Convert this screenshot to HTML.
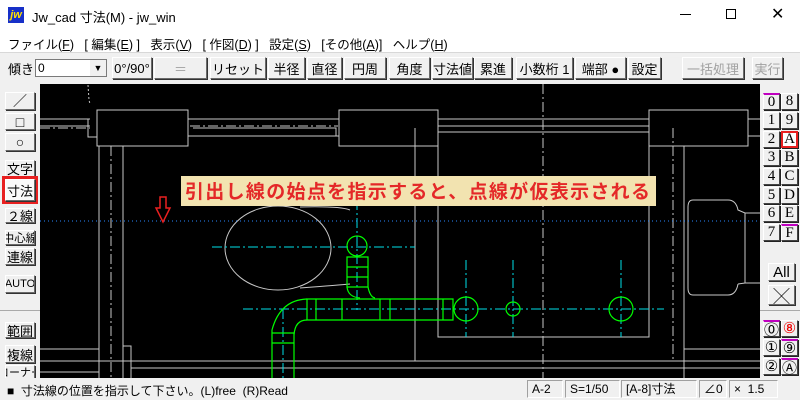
<!DOCTYPE html>
<html><head><meta charset="utf-8"><style>
*{margin:0;padding:0;box-sizing:border-box}
body{width:800px;height:400px;overflow:hidden;background:#f0f0f0;font-family:"Liberation Sans","Noto Sans CJK JP",sans-serif;font-size:12px;color:#000;position:relative}
.a{position:absolute;white-space:nowrap}
.b{position:absolute;background:#f0f0f0;border:1px solid;border-color:#fff #6a6a6a #6a6a6a #fff;box-shadow:1px 1px 0 #333;display:flex;align-items:center;justify-content:center;font-size:13px;white-space:nowrap;overflow:hidden}
.g{color:#a0a0a0}
.rb{position:absolute;width:17px;height:17px;border:1px solid;border-color:#fff #444 #444 #fff;box-shadow:1px 1px 0 #222;background:#f0f0f0;font-family:"Liberation Serif",serif;font-size:15px;display:flex;align-items:center;justify-content:center}
.sb{position:absolute;top:380px;height:18px;border:1px solid;border-color:#a0a0a0 #fff #fff #a0a0a0;font-size:12px;line-height:16px;padding-left:4px}
</style></head><body>
<div class="a" style="left:0;top:0;width:800px;height:30px;background:#fff"></div>
<div class="a" style="left:8px;top:7px;width:16px;height:16px;background:#1730c8;color:#ffe000;font:bold italic 11px 'Liberation Sans';line-height:16px;text-align:center">jw</div>
<div class="a" style="left:32px;top:7px;font-size:13px">Jw_cad 寸法(M) - jw_win</div>
<div class="a" style="left:680px;top:14px;width:11px;height:1px;background:#000"></div>
<div class="a" style="left:726px;top:9px;width:10px;height:10px;border:1px solid #000"></div>
<div class="a" style="left:771px;top:4px;font-size:16px">✕</div>
<div class="a" style="left:0;top:30px;width:800px;height:22px;background:#fff"></div>
<div class="a" style="left:8px;top:34px;font-size:12.5px">ファイル(<u>F</u>)&nbsp;&nbsp;&nbsp;[ 編集(<u>E</u>) ]&nbsp;&nbsp;&nbsp;表示(<u>V</u>)&nbsp;&nbsp;&nbsp;[ 作図(<u>D</u>) ]&nbsp;&nbsp;&nbsp;設定(<u>S</u>)&nbsp;&nbsp;&nbsp;[その他(<u>A</u>)]&nbsp;&nbsp;&nbsp;ヘルプ(<u>H</u>)</div>
<div class="a" style="left:0;top:52px;width:800px;height:1px;background:#d8d8d8"></div>
<div class="a" style="left:8px;top:59px;font-size:13px">傾き</div>
<div class="a" style="left:35px;top:59px;width:72px;height:18px;background:#fff;border:1px solid #7a7a7a;font-size:12px;padding-left:2px;line-height:16px">0</div>
<div class="a" style="left:90px;top:60px;width:16px;height:16px;background:#f0f0f0;font-size:9px;text-align:center;line-height:16px">▼</div>
<div class="b" style="left:112px;top:57px;width:40px;height:22px">0°/90°</div>
<div class="b g" style="left:154px;top:57px;width:53px;height:22px">＝</div>
<div class="b" style="left:210px;top:57px;width:56px;height:22px">リセット</div>
<div class="b" style="left:268px;top:57px;width:37px;height:22px">半径</div>
<div class="b" style="left:307px;top:57px;width:35px;height:22px">直径</div>
<div class="b" style="left:344px;top:57px;width:42px;height:22px">円周</div>
<div class="b" style="left:389px;top:57px;width:41px;height:22px">角度</div>
<div class="b" style="left:432px;top:57px;width:41px;height:22px">寸法値</div>
<div class="b" style="left:474px;top:57px;width:38px;height:22px">累進</div>
<div class="b" style="left:516px;top:57px;width:57px;height:22px">小数桁 1</div>
<div class="b" style="left:575px;top:57px;width:51px;height:22px">端部 ●</div>
<div class="b" style="left:628px;top:57px;width:33px;height:22px">設定</div>
<div class="b g" style="left:682px;top:57px;width:62px;height:22px">一括処理</div>
<div class="b g" style="left:752px;top:57px;width:31px;height:22px">実行</div>
<svg class="a" style="left:40px;top:84px" width="720" height="294" viewBox="40 84 720 294">
<rect x="40" y="84" width="720" height="294" fill="#000"/>
<g fill="none" stroke="#c8c8c8" stroke-width="1">
<path d="M88 85 L89 100 L90 104" stroke-dasharray="2 2"/>
<path d="M40 119H90M40 126H90M88 119V137H97M97 110H188V146H97Z"/>
<path d="M188 119H339M188 136H339M193 128H336V136"/>
<path d="M339 110H438V146H339Z"/>
<path d="M99 146V378M123 146V378M123 346H131V378M131 368H760"/>
<path d="M40 349H99M40 372H99"/>
<path d="M438 132H649V337H438Z"/>
<path d="M438 119H649M438 126H649"/>
<path d="M649 110H748V146H649Z"/>
<path d="M684 146V378M684 349H760M748 119H760M748 136H760"/>
<path d="M415 128V361M44 361H760"/>
<path d="M693 200H728Q736 200 738 210L745 213H760M738 284Q736 295 728 295H693Q688 295 688 288V207Q688 200 693 200M738 284L745 283H760M745 213V283"/>
<ellipse cx="278" cy="248" rx="53" ry="42"/>
<path d="M300 207Q340 206 350 210M300 288Q340 285 350 284"/>
</g>
<g fill="none" stroke="#c8c8c8" stroke-dasharray="10 3 2 3">
<path d="M111 146V378M543 84V378M673 128V361M40 128H90M40 361H760M190 126H338"/>
</g>
<g fill="none" stroke="#00e0e8" stroke-dasharray="10 3 2 3">
<path d="M212 247H415M357 200V310M243 309H664M466 260V337M513 260V337M621 260V337M283 309V378"/>
</g>
<g fill="none" stroke="#00ff00" stroke-width="1.2">
<circle cx="357" cy="246" r="10"/>
<path d="M347 257H368V287H347ZM347 267H368M347 277H368"/>
<path d="M347 287Q348 297 360 298M368 287Q370 297 375 298"/>
<path d="M307 299H453V320H307ZM316 299V320M342 299V320M380 299V320M390 299V320M443 299V320"/>
<path d="M307 299Q280 300 272 330V378M307 320Q295 320 294 335V378M272 333H294V343H272Z"/>
<circle cx="466" cy="309" r="12"/><circle cx="513" cy="309" r="7"/><circle cx="621" cy="309" r="12"/>
</g>
<line x1="40" y1="221" x2="760" y2="221" stroke="#2a88ff" stroke-dasharray="1 3"/>
<path d="M160 197H166V208H170L163 222L156 208H160Z" fill="none" stroke="#e82020" stroke-width="1.5"/>
<rect x="181" y="176" width="475" height="30" fill="#f2e3b0"/>
<text x="185" y="198" fill="#e42828" font-family="Liberation Sans,Noto Sans CJK JP,sans-serif" font-weight="bold" font-size="19" textLength="465">引出し線の始点を指示すると、点線が仮表示される</text>
</svg>
<div class="b" style="left:5px;top:92px;width:30px;height:18px;font-size:14px">／</div>
<div class="b" style="left:5px;top:113px;width:30px;height:17px;font-size:14px">□</div>
<div class="b" style="left:5px;top:133px;width:30px;height:18px;font-size:14px">○</div>
<div class="b" style="left:5px;top:160px;width:30px;height:17px">文字</div>
<div class="a" style="left:2px;top:176px;width:36px;height:28px;border:3px solid #e82020"></div>
<div class="b" style="left:5px;top:179px;width:30px;height:22px;background:#fafafa">寸法</div>
<div class="b" style="left:5px;top:208px;width:30px;height:15px">２線</div>
<div class="b" style="left:5px;top:230px;width:30px;height:15px;font-size:11.5px">中心線</div>
<div class="b" style="left:5px;top:248px;width:30px;height:17px">連線</div>
<div class="b" style="left:5px;top:275px;width:30px;height:18px;font-size:11px">AUTO</div>
<div class="a" style="left:0;top:310px;width:40px;height:1px;background:#aaa"></div>
<div class="b" style="left:5px;top:322px;width:30px;height:16px">範囲</div>
<div class="b" style="left:5px;top:345px;width:30px;height:18px">複線</div>
<div class="b" style="left:5px;top:365px;width:30px;height:14px;font-size:11px">コーナー</div>
<div class="rb" style="left:763px;top:93px;border-top:2px solid #c000c0">0</div><div class="rb" style="left:781px;top:93px">8</div>
<div class="rb" style="left:763px;top:112px">1</div><div class="rb" style="left:781px;top:112px">9</div>
<div class="rb" style="left:763px;top:131px">2</div><div class="rb" style="left:781px;top:131px;border:2px solid #e82020;background:#fff">A</div>
<div class="rb" style="left:763px;top:149px">3</div><div class="rb" style="left:781px;top:149px">B</div>
<div class="rb" style="left:763px;top:168px">4</div><div class="rb" style="left:781px;top:168px">C</div>
<div class="rb" style="left:763px;top:187px">5</div><div class="rb" style="left:781px;top:187px">D</div>
<div class="rb" style="left:763px;top:205px">6</div><div class="rb" style="left:781px;top:205px">E</div>
<div class="rb" style="left:763px;top:224px">7</div><div class="rb" style="left:781px;top:224px;border-top:2px solid #c000c0">F</div>
<div class="b" style="left:768px;top:263px;width:27px;height:18px;font-size:15px">All</div>
<div class="b" style="left:768px;top:285px;width:27px;height:20px;font-size:16px">╳</div>
<div class="a" style="left:760px;top:310px;width:40px;height:1px;background:#aaa"></div>
<div class="rb" style="left:763px;top:320px;border-top:2px solid #c000c0">⓪</div><div class="rb" style="left:781px;top:320px;color:#e00">⑧</div>
<div class="rb" style="left:763px;top:339px">①</div><div class="rb" style="left:781px;top:339px;border-top:2px solid #c000c0">⑨</div>
<div class="rb" style="left:763px;top:358px">②</div><div class="rb" style="left:781px;top:358px;border-top:2px solid #c000c0">Ⓐ</div>
<div class="a" style="left:0;top:378px;width:800px;height:22px;background:#f0f0f0"></div>
<div class="a" style="left:7px;top:382px;font-size:12px">■&nbsp;&nbsp;寸法線の位置を指示して下さい。(L)free&nbsp;&nbsp;(R)Read</div>
<div class="sb" style="left:527px;width:36px">A-2</div>
<div class="sb" style="left:565px;width:55px">S=1/50</div>
<div class="sb" style="left:621px;width:76px">[A-8]寸法</div>
<div class="sb" style="left:699px;width:28px">∠0</div>
<div class="sb" style="left:729px;width:49px">×&nbsp;&nbsp;1.5</div>
</body></html>
